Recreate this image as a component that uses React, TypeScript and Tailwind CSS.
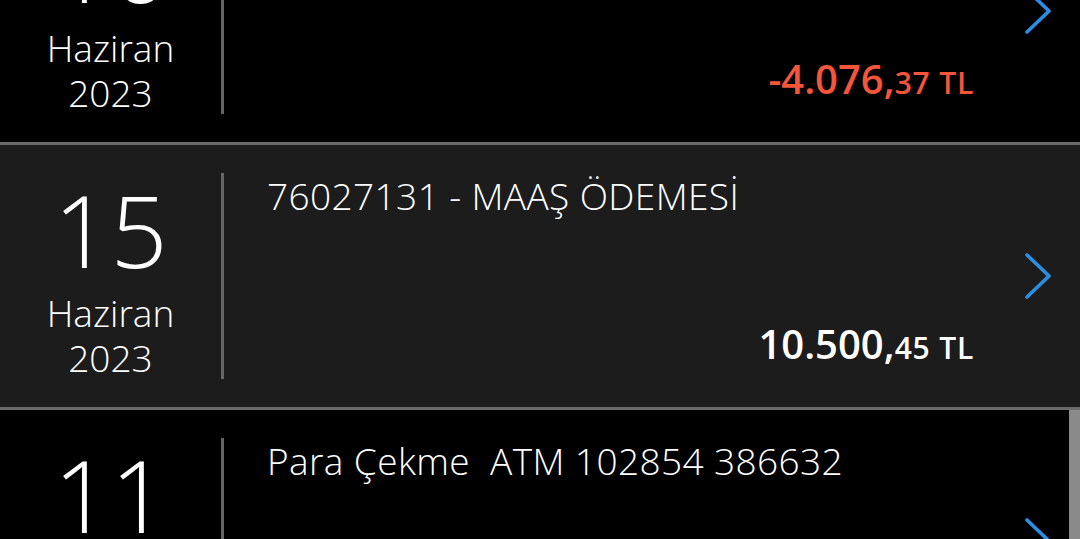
import React from 'react';

interface Txn {
  day: string;
  month: string;
  year: string;
  title: string;
  whole: string;
  cents: string;
  negative?: boolean;
  highlight?: boolean;
}

const txns: Txn[] = [
  {
    day: '16',
    month: 'Haziran',
    year: '2023',
    title: 'Kartlı Alışveriş',
    whole: '-4.076,',
    cents: '37',
    negative: true
  },
  {
    day: '15',
    month: 'Haziran',
    year: '2023',
    title: '76027131 - MAAŞ ÖDEMESİ',
    whole: '10.500,',
    cents: '45',
    highlight: true
  },
  {
    day: '11',
    month: 'Haziran',
    year: '2023',
    title: 'Para Çekme  ATM 102854 386632',
    whole: '-1.000,',
    cents: '00',
    negative: true
  }];

function Chevron() {
  return (
    <svg width="28" height="48" viewBox="0 0 28 48" fill="none">
      <polyline
        points="3,3 25,24 3,45"
        stroke="#2a8ee2"
        strokeWidth="3.6"
        strokeLinecap="round"
        strokeLinejoin="round" />
    </svg>);

}

function TxnRow({ t }: { t: Txn }) {
  return (
    <div
      className={`flex h-[265px] border-b-[3px] border-[#6b6b6b] ${t.highlight ? 'bg-[#1c1c1c]' : 'bg-black'}`}>

      <div className="w-[221px] flex flex-col items-center pt-[34px] text-white font-light">
        <span className="text-[100px] leading-[100px]">{t.day}</span>
        <span className="mt-[11px] text-[37px] leading-[45px]">{t.month}</span>
        <span className="text-[37px] leading-[45px]">{t.year}</span>
      </div>
      <div className="w-[3px] my-[28px] bg-[#666666]" />
      <div className="flex-1 flex flex-col justify-between pl-[43px] pt-[29px] pb-[37px] max-w-[754px]">
        <div className="text-[37px] leading-[44px] tracking-[0.4px] font-light text-white whitespace-pre">
          {t.title}
        </div>
        <div
          className={`self-end text-[40px] leading-[44px] font-semibold ${t.negative ? 'text-[#f4553b]' : 'text-white'}`}>

          {t.whole}
          <span className="text-[30px] tracking-[0.8px]">{t.cents} TL</span>
        </div>
      </div>
      <div className="w-[106px] flex items-center pl-[50px]">
        <Chevron />
      </div>
    </div>);

}

export default function App() {
  return (
    <div
      className="relative w-[1080px] h-[539px] overflow-hidden bg-black"
      style={{ fontFamily: '"Open Sans", "Noto Sans", sans-serif' }}>

      <div className="-mt-[120px]">
        {txns.map((t) =>
        <TxnRow key={t.day} t={t} />
        )}
      </div>
      <div className="absolute right-0 top-[410px] w-[11px] h-[129px] bg-[#8a8a8a]" />
    </div>);

}
